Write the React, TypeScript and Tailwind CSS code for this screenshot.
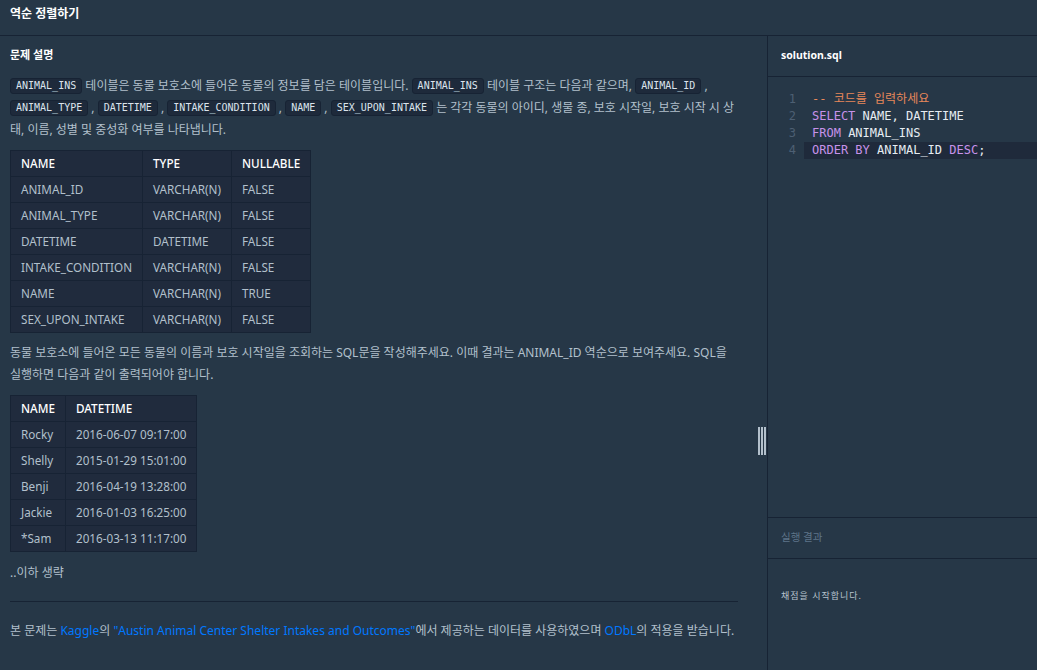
import React from 'react';

const Code = ({ children }: { children: React.ReactNode }) => (
  <code className="inline-block bg-[#1e2a3b] border border-[#172334] rounded-[3px] px-[5px] leading-[14px] text-[10px] text-[#dbe3ec] font-['DejaVu_Sans_Mono',monospace] align-[1px]">
    {children}
  </code>
);

const schema = [
  ['ANIMAL_ID', 'VARCHAR(N)', 'FALSE'],
  ['ANIMAL_TYPE', 'VARCHAR(N)', 'FALSE'],
  ['DATETIME', 'DATETIME', 'FALSE'],
  ['INTAKE_CONDITION', 'VARCHAR(N)', 'FALSE'],
  ['NAME', 'VARCHAR(N)', 'TRUE'],
  ['SEX_UPON_INTAKE', 'VARCHAR(N)', 'FALSE'],
];

const result = [
  ['Rocky', '2016-06-07 09:17:00'],
  ['Shelly', '2015-01-29 15:01:00'],
  ['Benji', '2016-04-19 13:28:00'],
  ['Jackie', '2016-01-03 16:25:00'],
  ['*Sam', '2016-03-13 11:17:00'],
];

function DataTable({ head, rows }: { head: string[]; rows: string[][] }) {
  return (
    <table className="border-collapse bg-[#202b3d] text-[11.7px]">
      <thead>
        <tr>
          {head.map((h) => (
            <th key={h} className="h-[26px] px-[10px] py-0 border border-[#172334] text-left font-medium text-white">
              {h}
            </th>
          ))}
        </tr>
      </thead>
      <tbody className="text-[#b2c0cc]">
        {rows.map((r) => (
          <tr key={r[0]}>
            {r.map((c, i) => (
              <td key={i} className="h-[26px] px-[10px] py-0 border border-[#172334] whitespace-nowrap">
                {c}
              </td>
            ))}
          </tr>
        ))}
      </tbody>
    </table>
  );
}

export default function App() {
  const kw = 'text-[#c792ea]';
  return (
    <div className="w-[1037px] h-[670px] bg-[#263747] flex flex-col font-['Noto_Sans','Noto_Sans_CJK_KR',sans-serif] text-[#b2c0cc] overflow-hidden">
      <header className="h-[36px] shrink-0 border-b border-[#172334] px-[10px] pt-[3px]">
        <h1 className="text-[12px] leading-[22px] font-bold text-white">역순 정렬하기</h1>
      </header>

      <div className="flex flex-1 min-h-0">
        {/* Left: problem description */}
        <section className="relative w-[768px] shrink-0 border-r border-[#172334] pl-[10px] pr-[29px] pt-[8px]">
          <h2 className="text-[11px] leading-[22px] font-bold text-white">문제 설명</h2>

          <p className="mt-[9px] text-[12px] leading-[22px]">
            <Code>ANIMAL_INS</Code> 테이블은 동물 보호소에 들어온 동물의 정보를 담은 테이블입니다. <Code>ANIMAL_INS</Code> 테이블 구조는 다음과 같으며, <Code>ANIMAL_ID</Code> , <Code>ANIMAL_TYPE</Code> , <Code>DATETIME</Code> , <Code>INTAKE_CONDITION</Code> , <Code>NAME</Code> , <Code>SEX_UPON_INTAKE</Code> 는 각각 동물의 아이디, 생물 종, 보호 시작일, 보호 시작 시 상태, 이름, 성별 및 중성화 여부를 나타냅니다.
          </p>

          <div className="mt-[9px]">
            <DataTable head={['NAME', 'TYPE', 'NULLABLE']} rows={schema} />
          </div>

          <p className="mt-[9px] text-[12px] leading-[22px]">
            동물 보호소에 들어온 모든 동물의 이름과 보호 시작일을 조회하는 SQL문을 작성해주세요. 이때 결과는 ANIMAL_ID 역순으로 보여주세요. SQL을 실행하면 다음과 같이 출력되어야 합니다.
          </p>

          <div className="mt-[9px]">
            <DataTable head={['NAME', 'DATETIME']} rows={result} />
          </div>

          <p className="mt-[10px] text-[12px] leading-[22px]">..이하 생략</p>

          <hr className="mt-[17px] border-0 border-t border-[#172334]" />

          <p className="mt-[18px] text-[12px] leading-[22px]">
            본 문제는 <span className="text-[#0078ff]">Kaggle</span>의 <span className="text-[#0078ff]">"Austin Animal Center Shelter Intakes and Outcomes"</span>에서 제공하는 데이터를 사용하였으며 <span className="text-[#0078ff]">ODbL</span>의 적용을 받습니다.
          </p>

          {/* resize handle */}
          <div className="absolute right-[1px] top-[391px] flex gap-[1px]">
            <span className="w-[2px] h-[28px] bg-[#b3c0cc]" />
            <span className="w-[2px] h-[28px] bg-[#b3c0cc]" />
            <span className="w-[2px] h-[28px] bg-[#b3c0cc]" />
          </div>
        </section>

        {/* Right: editor + results */}
        <aside className="flex-1 flex flex-col min-w-0">
          <div className="h-[41px] shrink-0 border-b border-[#172334] flex items-center px-[13px]">
            <span className="text-[10.5px] font-bold text-white">solution.sql</span>
          </div>

          <div className="h-[441px] shrink-0 border-b border-[#172334] pt-[14px] font-['DejaVu_Sans_Mono','Noto_Sans_CJK_KR',monospace] text-[12px] leading-[17px]">
            {[
              <span className="text-[#e8875a]">-- 코드를 입력하세요</span>,
              <>
                <span className={kw}>SELECT</span> <span className="text-[#e6ecf2]">NAME, DATETIME</span>
              </>,
              <>
                <span className={kw}>FROM</span> <span className="text-[#e6ecf2]">ANIMAL_INS</span>
              </>,
              <>
                <span className={kw}>ORDER BY</span> <span className="text-[#e6ecf2]">ANIMAL_ID</span> <span className={kw}>DESC</span>
                <span className="text-[#e6ecf2]">;</span>
              </>,
            ].map((line, i) => (
              <div key={i} className="flex">
                <span className="w-[28px] shrink-0 text-right text-[#4d5f73]">{i + 1}</span>
                <div className={`ml-[8px] flex-1 pl-[8px] whitespace-pre ${i === 3 ? 'bg-[#1f2a3b]' : ''}`}>{line}</div>
              </div>
            ))}
          </div>

          <div className="h-[41px] shrink-0 border-b border-[#172334] flex items-center px-[13px]">
            <span className="text-[10.5px] text-[#5e7489]">실행 결과</span>
          </div>

          <div className="flex-1 px-[13px] pt-[30px]">
            <p className="text-[9px] leading-[14px] tracking-[1px] text-[#b8c4ce]">채점을 시작합니다.</p>
          </div>
        </aside>
      </div>
    </div>
  );
}
